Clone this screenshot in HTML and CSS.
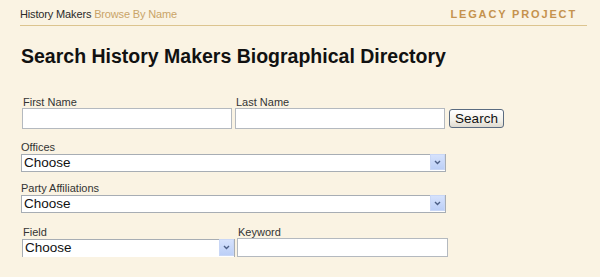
FILE: index.html
```html
<!DOCTYPE html>
<html lang="en">
  <head>
    <meta charset="UTF-8" />
    <meta name="viewport" content="width=device-width, initial-scale=1.0" />
    <title>Search History Makers</title>
    <link rel="stylesheet" href="styles.css">
  </head>
  <body>
    <div class="header">
      <div class="crumbs">
        History Makers <a href="#" class="crumb-link">Browse By Name</a>
      </div>
      <div class="brand">LEGACY PROJECT</div>
    </div>

    <h1>Search History Makers Biographical Directory</h1>

    <form class="search-form">
      <div class="row row-names">
        <div class="field">
          <label for="firstName">First Name</label>
          <input type="text" id="firstName" class="text-input" />
        </div>
        <div class="field">
          <label for="lastName">Last Name</label>
          <input type="text" id="lastName" class="text-input" />
        </div>
        <button type="submit" class="search-button">Search</button>
      </div>

      <div class="field field-offices">
        <label for="offices">Offices</label>
        <div class="select-wrap wide">
          <select id="offices"><option>Choose</option></select>
          <span class="select-arrow">
            <svg width="7" height="5" viewBox="0 0 7 5"><path d="M1 1 L3.5 3.5 L6 1" fill="none" stroke="#4c5f86" stroke-width="1.4"/></svg>
          </span>
        </div>
      </div>

      <div class="field field-party">
        <label for="party">Party Affiliations</label>
        <div class="select-wrap wide">
          <select id="party"><option>Choose</option></select>
          <span class="select-arrow">
            <svg width="7" height="5" viewBox="0 0 7 5"><path d="M1 1 L3.5 3.5 L6 1" fill="none" stroke="#4c5f86" stroke-width="1.4"/></svg>
          </span>
        </div>
      </div>

      <div class="row row-keyword">
        <div class="field">
          <label for="fieldSelect">Field</label>
          <div class="select-wrap narrow">
            <select id="fieldSelect"><option>Choose</option></select>
            <span class="select-arrow">
              <svg width="7" height="5" viewBox="0 0 7 5"><path d="M1 1 L3.5 3.5 L6 1" fill="none" stroke="#4c5f86" stroke-width="1.4"/></svg>
            </span>
          </div>
        </div>
        <div class="field">
          <label for="keyword">Keyword</label>
          <input type="text" id="keyword" class="text-input keyword-input" />
        </div>
      </div>
    </form>
  </body>
</html>
```

FILE: styles.css
```css
/* Reset */
* {
  margin: 0;
  padding: 0;
  box-sizing: border-box;
}

body {
  font-family: "Liberation Sans", Arial, sans-serif;
  background-color: #faf3e3; /* cream page */
  color: #222;
  padding: 0 13px 0 20px;
}

/* Top bar */
.header {
  display: flex;
  justify-content: space-between;
  align-items: flex-end;
  height: 26px;
  padding: 0 10px 4px 0;
  border-bottom: 1px solid #dcc48f;
}

.crumbs {
  font-size: 11px;
  line-height: 14px;
  letter-spacing: -0.15px;
  color: #2a2a2a;
}

.crumb-link {
  color: #c9a468;
  text-decoration: none;
}

.brand {
  font-size: 11px;
  line-height: 14px;
  font-weight: bold;
  letter-spacing: 1.85px;
  color: #c5924e;
}

h1 {
  font-size: 19.5px;
  line-height: 24px;
  font-weight: bold;
  color: #111;
  margin: 18px 0 0 1px;
}

/* Form */
.search-form {
  margin-top: 29px;
}

.row {
  display: flex;
  align-items: flex-end;
}

.field {
  display: flex;
  flex-direction: column;
}

label {
  font-size: 11px;
  line-height: 11px;
  color: #333;
}

.row-names {
  padding-left: 2px;
}

.row-names .field + .field {
  margin-left: 3px;
}

.row-names label {
  padding-left: 1px;
}

.text-input {
  width: 210px;
  height: 21px;
  border: 1px solid #b4b9bf;
  background-color: #fff;
  font-size: 13px;
  font-family: inherit;
  padding: 0 2px;
}

.text-input:focus {
  outline: none;
  border-color: #7f9db9;
}

.search-button {
  width: 55px;
  height: 19px;
  margin: 0 0 1px 4px;
  font-family: inherit;
  font-size: 13.5px;
  line-height: 15px;
  color: #111;
  border: 1px solid #5a6b80;
  border-radius: 3px;
  background: linear-gradient(#ffffff, #f3f1ea 60%, #dedad0);
  cursor: pointer;
}

.field-offices {
  margin: 13px 0 0 1px;
}

.field-party {
  margin: 12px 0 0 1px;
}

.row-keyword {
  margin-top: 15px;
  padding-left: 2px;
}

.row-keyword label {
  padding-left: 1px;
}

.row-keyword .field + .field {
  margin-left: 2px;
}

/* Windows style dropdowns */
.select-wrap {
  position: relative;
  height: 18px;
}

.select-wrap.wide {
  width: 425px;
}

.select-wrap.narrow {
  width: 213px;
  height: 19px;
}

.select-wrap select {
  appearance: none;
  -webkit-appearance: none;
  width: 100%;
  height: 100%;
  border: 1px solid #a7adb4;
  background-color: #fff;
  font-family: inherit;
  font-size: 13.5px;
  line-height: 16px;
  color: #111;
  padding: 0 0 0 2px;
}

.select-arrow {
  position: absolute;
  top: 1px;
  right: 1px;
  bottom: 1px;
  width: 15px;
  display: flex;
  align-items: center;
  justify-content: center;
  background: linear-gradient(#d6e2fc, #bccff7);
  border: 1px solid #c9d7f6;
  pointer-events: none;
}

.keyword-input {
  width: 211px;
  height: 19px;
}
```
